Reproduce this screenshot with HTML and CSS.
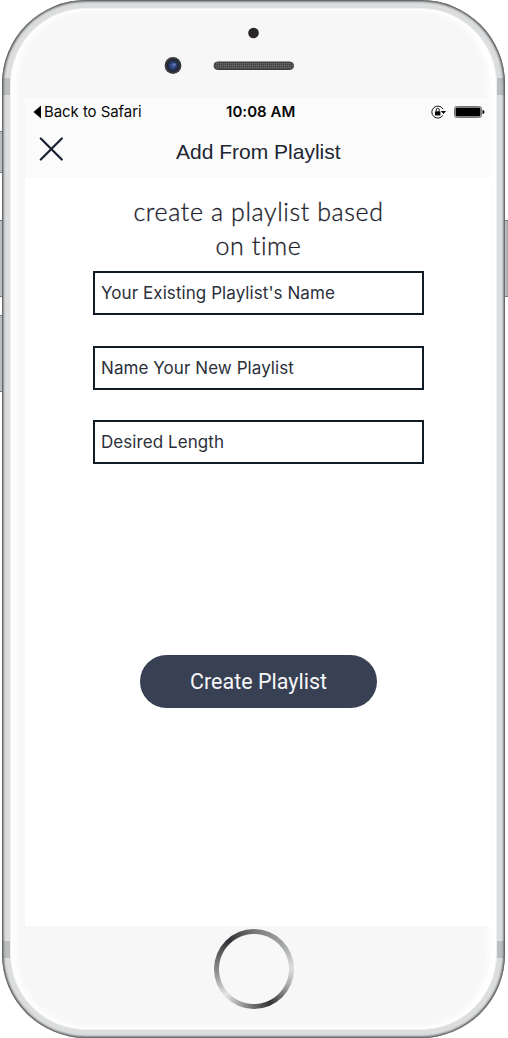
FILE: index.html
```html
<!DOCTYPE html>
<html lang="en">
<head>
<meta charset="utf-8">
<title>Add From Playlist</title>
<link rel="stylesheet" href="styles.css">
</head>
<body>
<div class="device">
  <i class="key key-mute"></i>
  <i class="key key-up"></i>
  <i class="key key-down"></i>
  <i class="key key-power"></i>
  <div class="shell">
    <i class="band band-top"></i>
    <i class="band band-bottom"></i>
    <div class="glass">
      <div class="bezel-top">
        <svg class="sensors" width="130" height="54" viewBox="0 0 130 54" aria-hidden="true">
          <defs>
            <pattern id="mesh" width="2" height="2" patternUnits="userSpaceOnUse"><rect width="2" height="2" fill="#4b4b4b"/><rect width="1" height="1" fill="#717171"/></pattern>
            <radialGradient id="lens"><stop offset="0" stop-color="#4b65a5"/><stop offset=".45" stop-color="#26376b"/><stop offset=".65" stop-color="#222733"/><stop offset="1" stop-color="#414141"/></radialGradient>
          </defs>
          <circle cx="89.5" cy="8" r="5.3" fill="#2a2627"/>
          <circle cx="9" cy="40.5" r="8.4" fill="url(#lens)"/>
          <circle cx="10.5" cy="39.5" r="1.3" fill="#6680b8"/>
          <rect x="50" y="37" width="79.5" height="7.5" rx="3.75" fill="url(#mesh)" stroke="#3c3c3c"/>
        </svg>
      </div>
      <main class="screen">
        <header class="header">
          <div class="status">
            <span class="back"><svg width="9" height="14" viewBox="0 0 9 14"><path d="M8 .5v13L.5 7z"/></svg><span class="back-text">Back to Safari</span></span>
            <span class="clock">10:08 AM</span>
            <span class="indicators">
              <svg width="16" height="14" viewBox="0 0 16 14"><path d="M11.9 10.3A6 6 0 1 1 12.1 4.2" fill="none" stroke="#111"/><path d="M9.8 6h5.2l-2.5 3z"/><rect x="4" y="6.2" width="5.4" height="4.2" rx=".5"/><path d="M5.2 6V4.8a1.5 1.5 0 0 1 3 0V6" fill="none" stroke="#111"/></svg>
              <svg width="32" height="12" viewBox="0 0 32 12"><rect x=".5" y=".5" width="27" height="11" rx="2" fill="#fff" stroke="#777"/><rect x="1.5" y="1.5" width="25" height="9" rx="1"/><path d="M28.5 4q2 0 2 2t-2 2z"/></svg>
            </span>
          </div>
          <div class="nav">
            <svg class="close" width="24" height="24" viewBox="0 0 24 24"><path d="M1.8 1.5l21 21M22.8 1.5l-21 21" stroke="#172030" stroke-width="2.2" stroke-linecap="round"/></svg>
            <h1 class="title">Add From Playlist</h1>
          </div>
        </header>
        <form class="form">
          <p class="prompt"><span class="line-one">create a playlist based</span><br><span class="line-two">on time</span></p>
          <div class="field"><span class="label-existing">Your Existing Playlist's Name</span></div>
          <div class="field"><span class="label-new">Name Your New Playlist</span></div>
          <div class="field"><span class="label-length">Desired Length</span></div>
          <button class="create" type="button">Create Playlist</button>
        </form>
      </main>
      <div class="bezel-bottom"><div class="home"></div></div>
    </div>
  </div>
</div>
</body>
</html>
```
FILE: styles.css
```css
* { box-sizing: border-box; }
body { margin: 0; background: #fff; overflow: hidden; }
.device { position: relative; width: 508px; height: 1038px; padding-left: 2px; }
.shell {
  position: relative; width: 503px; height: 1038px; padding: 8px;
  border-radius: 84px; background: #dbddde;
  box-shadow: inset 0 0 1px 1px #666, inset 0 0 2px 2px #8b8c8e;
}
.glass {
  width: 487px; height: 1022px; border-radius: 76px; background: #f7f7f7;
  border: 1px solid #f0f0f0;
  box-shadow: inset 0 0 0 1px #fff, inset 5px 0 7px #fff, inset -7px 0 6px #fff;
  padding: 0 6px 0 14px;
}
.bezel-top { height: 89px; padding: 16px 0 0 139px; }
.sensors { display: block; }
.screen { height: 828px; background: #fff; }
.header { height: 80px; background: #fbfbfb; }
.status {
  height: 27px; display: grid; grid-template-columns: 200px 1fr 59px; align-items: center;
  font: 15px Inter, sans-serif; color: #080808; padding: 0 0 0 8px;
}
.back, .indicators { display: flex; align-items: center; gap: 2px; }
.indicators { gap: 7px; }
.back-text { letter-spacing: -.07px; }
.clock { font-weight: 600; margin-left: -7px; letter-spacing: .05px; }
.nav { height: 53px; display: flex; align-items: center; padding: 0 0 5px 14px; }
.close { flex: none; }
.title { margin: 5px 0 0 113px; font: 21px "Liberation Sans", sans-serif; color: #202632; white-space: nowrap; }
.form { padding: 16px 66px 0 68px; color: #1b202a; }
.prompt {
  margin: 0 0 9px; text-align: center; white-space: nowrap;
  font: 300 25px/34px Lato, sans-serif; letter-spacing: .6px;
  -webkit-text-stroke: .3px #1b202a;
}
.field {
  height: 44px; margin-bottom: 30.5px; border: 2px solid #111b25; padding-left: 6px;
  display: flex; align-items: center; background: #fff;
  font: 17px Inter, sans-serif; color: #2b303a; white-space: nowrap; letter-spacing: .07px;
}
.create {
  display: block; width: 237px; height: 53px; margin: 191px 0 0 47px; padding: 0;
  border: 0; border-radius: 27px; background: #384053; color: #f6f7f8;
  font: 21.5px Roboto, sans-serif;
}
.bezel-bottom { height: 103px; padding: 3px 0 0 189px; }
.home {
  width: 80px; height: 80px; border-radius: 50%;
  background: radial-gradient(circle, #f8f8f8 0 34.5px, transparent 35.5px),
    conic-gradient(#777, #a4a7a8 50deg, #dedede 90deg, #aaa 115deg, #333 155deg, #777 185deg, #e5e5e5 228deg, #999 260deg, #666 290deg, #303034 318deg, #777 360deg);
}
.key {
  position: absolute; left: -2px; width: 7px; height: 77px;
  background: linear-gradient(90deg, #77797c, #c8c9cc 35%, #a9abb0 65%, #77797c);
  border: 1px solid #77797c; border-radius: 2px;
}
.key-mute { top: 131px; height: 42px; }
.key-up { top: 220px; }
.key-down { top: 315px; }
.key-power { top: 220px; left: 503px; }
.band { position: absolute; left: 0; right: 0; height: 17px; border: solid rgba(90,94,98,.25); border-width: 0 8px; }
.band-top { top: 78px; }
.band-bottom { top: 941px; }
```
